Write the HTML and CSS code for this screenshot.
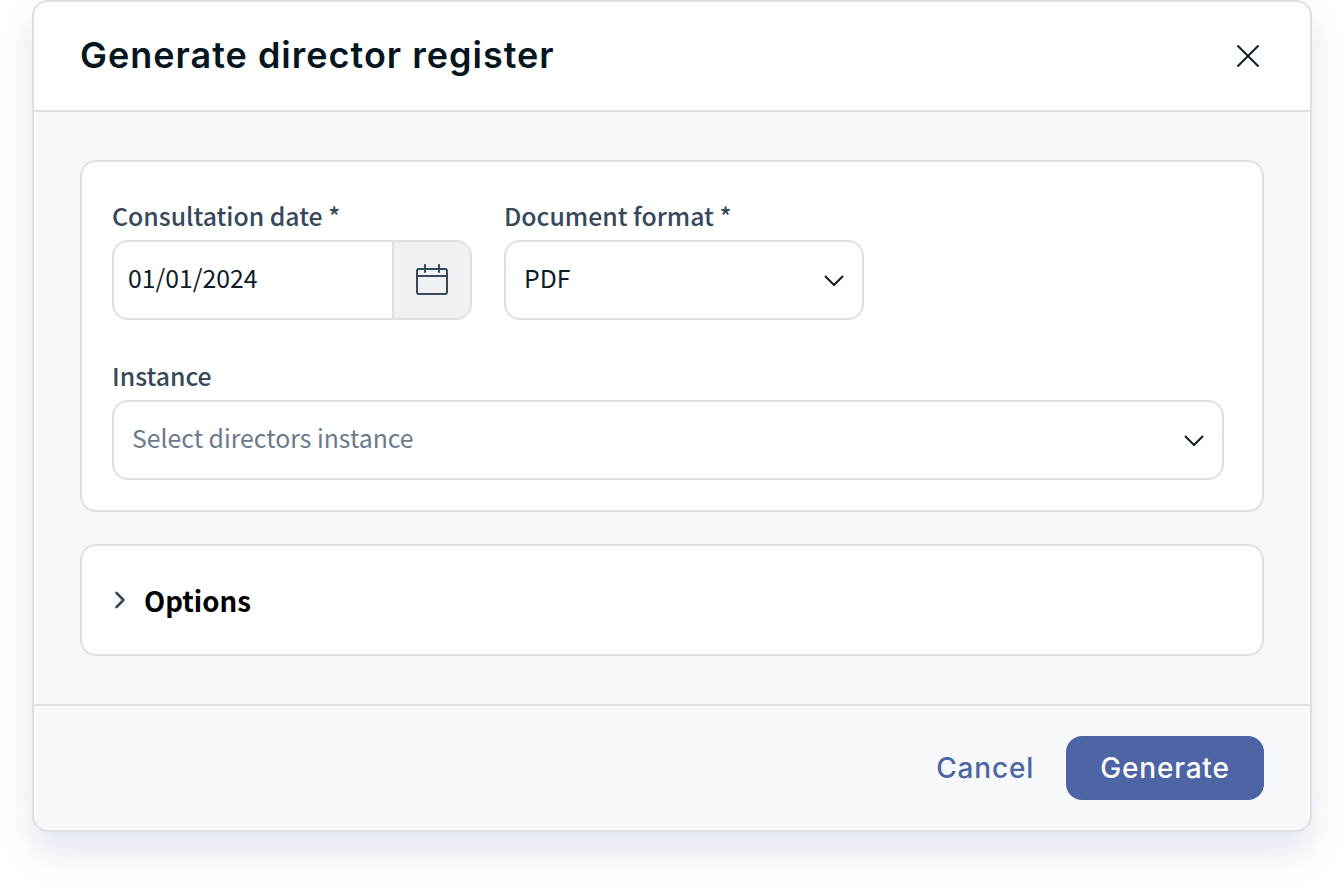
FILE: index.html
```html
<!DOCTYPE html>
<html lang="en">
<head>
<meta charset="utf-8">
<title>Generate director register</title>
<link rel="stylesheet" href="styles.css">
</head>
<body>
<div class="modal">
  <header class="modal-header">
    <h1 class="modal-title">Generate director register</h1>
    <svg class="close-icon" viewBox="0 0 24 24" width="24" height="24" fill="none" stroke="#0d1c26" stroke-width="2" stroke-linecap="round"><path d="M2 2L22 22M22 2L2 22"/></svg>
  </header>
  <main class="modal-body">
    <section class="card form-card">
      <div class="row">
        <div class="field">
          <label class="label">Consultation date *</label>
          <div class="control date-control">
            <span class="date-value">01/01/2024</span>
            <span class="date-addon">
              <svg viewBox="0 0 32 32" width="32" height="32" fill="none" stroke="#36485a" stroke-width="2" stroke-linecap="round" stroke-linejoin="round"><rect x="1" y="5" width="30" height="25" rx="2"/><path d="M1 12H31M9 1V8M23 1V8"/></svg>
            </span>
          </div>
        </div>
        <div class="field">
          <label class="label">Document format *</label>
          <div class="control select-control">
            <span class="select-value">PDF</span>
            <svg class="chevron" viewBox="0 0 20 12" width="20" height="12" fill="none" stroke="#0d1c26" stroke-width="2" stroke-linecap="round" stroke-linejoin="round"><path d="M1.5 1.5L10 10L18.500 1.500"/></svg>
          </div>
        </div>
      </div>
      <div class="field-wide">
        <label class="label">Instance</label>
        <div class="control select-control">
          <span class="select-value placeholder">Select directors instance</span>
          <svg class="chevron" viewBox="0 0 20 12" width="20" height="12" fill="none" stroke="#0d1c26" stroke-width="2" stroke-linecap="round" stroke-linejoin="round"><path d="M1.5 1.5L10 10L18.500 1.500"/></svg>
        </div>
      </div>
    </section>
    <section class="card options-card">
      <svg viewBox="0 0 12 20" width="12" height="20" fill="none" stroke="#36485a" stroke-width="2.6" stroke-linecap="round" stroke-linejoin="round"><path d="M2.500 3L9.500 10L2.500 17"/></svg>
      <span class="options-title">Options</span>
    </section>
  </main>
  <footer class="modal-footer">
    <button class="btn btn-link" type="button">Cancel</button>
    <button class="btn btn-primary" type="button">Generate</button>
  </footer>
</div>
</body>
</html>
```
FILE: styles.css
```css
* { box-sizing: border-box; }
html, body { margin: 0; height: 100%; background: #fff; overflow: hidden; }
body { padding: 0 32px; font-family: "Noto Sans CJK JP", "Noto Sans", sans-serif; color: #0d1c26; }

.modal {
  width: 1280px;
  height: 832px;
  display: flex;
  flex-direction: column;
  border: 2px solid #dcdfe4;
  border-radius: 16px;
  background: #f7f8fa;
  box-shadow: 0 24px 32px 0 rgba(76, 100, 165, 0.13), 0 0 32px 0 rgba(76, 100, 165, 0.05);
  overflow: hidden;
}

.modal-header {
  height: 110px;
  flex: none;
  display: flex;
  align-items: center;
  justify-content: space-between;
  padding: 0 50px 0 46px;
  background: #fff;
  border-bottom: 2px solid #dcdfe4;
}
.modal-title {
  margin: 0;
  padding-bottom: 2px;
  font-family: Inter, sans-serif;
  font-size: 36px;
  font-weight: 600;
  letter-spacing: 1px;
  line-height: 42px;
  color: #06161f;
}
.close-icon { display: block; }

.modal-body {
  flex: 1;
  display: flex;
  flex-direction: column;
  gap: 32px;
  padding: 48px 46px;
}
.card {
  background: #fff;
  border: 2px solid #dcdfe4;
  border-radius: 16px;
}
.form-card {
  height: 352px;
  padding: 38px 38px 30px 30px;
}
.row { display: flex; gap: 32px; margin-bottom: 40px; }
.field { width: 360px; }
.label {
  display: block;
  height: 40px;
  font-size: 24.8px;
  line-height: 30px;
  font-weight: 500;
  color: #36485a;
}
.control {
  height: 80px;
  display: flex;
  align-items: center;
  background: #fff;
  border: 2px solid #dcdfe4;
  border-radius: 16px;
  font-size: 24.8px;
  line-height: 32px;
  overflow: hidden;
}
.date-value, .select-value { padding-bottom: 6px; }
.date-value { flex: 1; padding-left: 14px; }
.date-addon {
  width: 78px;
  height: 100%;
  display: flex;
  align-items: center;
  justify-content: center;
  background: #f0f1f3;
  border-left: 2px solid #dcdfe4;
}
.select-control { justify-content: space-between; padding: 0 18px 0 18px; }
.placeholder { color: #6b7a89; }
.chevron { display: block; margin-top: 2px; }

.options-card {
  height: 112px;
  display: flex;
  align-items: center;
  gap: 18px;
  padding-left: 32px;
}
.options-title { font-size: 27.6px; font-weight: 700; color: #000; }

.modal-footer {
  flex: none;
  height: 126px;
  display: flex;
  align-items: center;
  justify-content: flex-end;
  gap: 32px;
  padding: 0 46px;
  border-top: 2px solid #dcdfe4;
}
.btn {
  height: 64px;
  border: 0;
  border-radius: 16px;
  font-family: Inter, sans-serif;
  font-size: 28px;
  font-weight: 500;
  letter-spacing: 0.8px;
  cursor: pointer;
}
.btn-link { background: transparent; color: #4d64a5; padding: 0; }
.btn-primary { width: 198px; background: #4d64a5; color: #fff; }
```
